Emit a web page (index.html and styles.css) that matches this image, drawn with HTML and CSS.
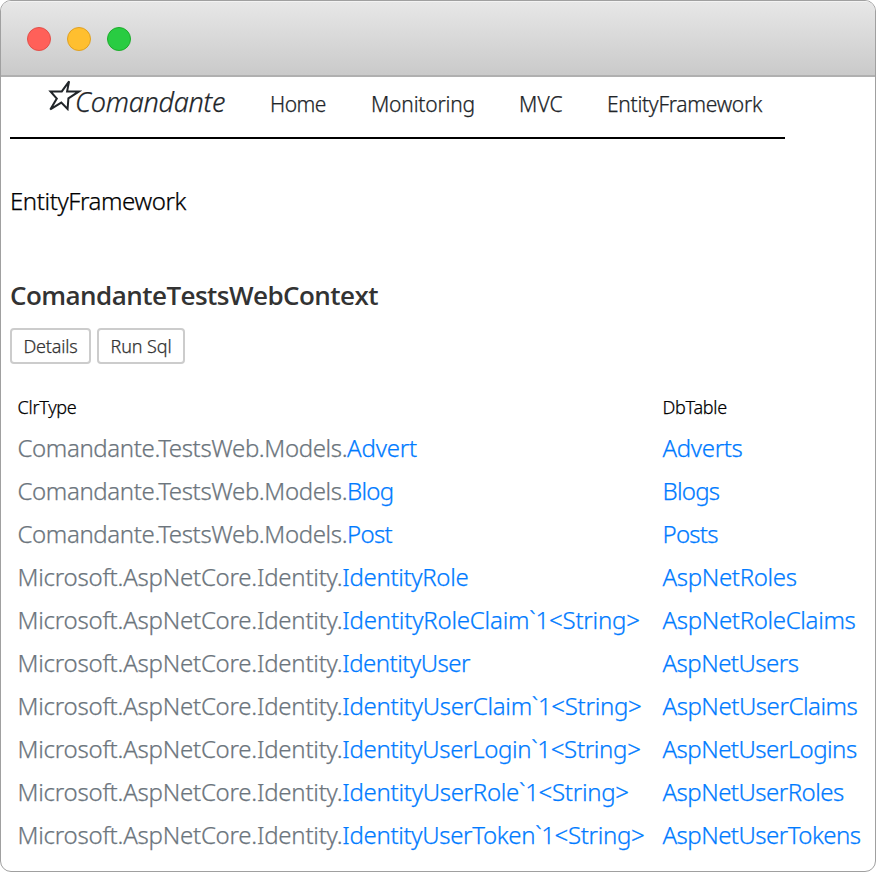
FILE: index.html
```html
<!DOCTYPE html>
<html lang="en">
<head>
<meta charset="utf-8">
<title>Comandante</title>
<link rel="stylesheet" href="styles.css">
</head>
<body>
<div class="window">
  <div class="titlebar"><i class="dot red"></i><i class="dot yellow"></i><i class="dot green"></i></div>
  <main class="content">
    <nav class="nav">
      <a class="brand"><svg class="star" viewBox="0 0 34 32" width="34" height="32"><path d="M21.1 2.4 L19.1 12.4 H31 L20.4 19.3 L19.6 30 L13.3 23.6 L2.3 30.4 L8.8 19.6 L2.5 12.4 H13.8 Z"/></svg><span>Comandante</span></a>
      <a class="home">Home</a>
      <a class="monitoring">Monitoring</a>
      <a class="mvc">MVC</a>
      <a class="entity">EntityFramework</a>
    </nav>
    <p class="page-title">EntityFramework</p>
    <h2>ComandanteTestsWebContext</h2>
    <div class="buttons"><button class="details">Details</button><button class="run">Run Sql</button></div>
    <table>
      <thead><tr><th>ClrType</th><th>DbTable</th></tr></thead>
      <tbody>
        <tr><td><span class="app">Comandante.TestsWeb.Models.</span><a class="short">Advert</a></td><td><a>Adverts</a></td></tr>
        <tr><td><span class="app">Comandante.TestsWeb.Models.</span><a class="tight">Blog</a></td><td><a class="tight">Blogs</a></td></tr>
        <tr><td><span class="app">Comandante.TestsWeb.Models.</span><a class="tight">Post</a></td><td><a class="tight">Posts</a></td></tr>
        <tr><td><span>Microsoft.AspNetCore.Identity.</span><a>IdentityRole</a></td><td><a>AspNetRoles</a></td></tr>
        <tr><td><span>Microsoft.AspNetCore.Identity.</span><a class="short">IdentityRoleClaim`1&lt;String&gt;</a></td><td><a>AspNetRoleClaims</a></td></tr>
        <tr><td><span>Microsoft.AspNetCore.Identity.</span><a class="long">IdentityUser</a></td><td><a class="long">AspNetUsers</a></td></tr>
        <tr><td><span>Microsoft.AspNetCore.Identity.</span><a class="claim">IdentityUserClaim`1&lt;String&gt;</a></td><td><a class="user-claims">AspNetUserClaims</a></td></tr>
        <tr><td><span>Microsoft.AspNetCore.Identity.</span><a>IdentityUserLogin`1&lt;String&gt;</a></td><td><a class="long">AspNetUserLogins</a></td></tr>
        <tr><td><span>Microsoft.AspNetCore.Identity.</span><a class="claim">IdentityUserRole`1&lt;String&gt;</a></td><td><a class="long">AspNetUserRoles</a></td></tr>
        <tr><td><span>Microsoft.AspNetCore.Identity.</span><a>IdentityUserToken`1&lt;String&gt;</a></td><td><a class="long">AspNetUserTokens</a></td></tr>
      </tbody>
    </table>
  </main>
</div>
</body>
</html>
```
FILE: styles.css
```css
* { box-sizing: border-box; }
body { margin: 0; background: #fff; font-family: "Noto Sans", "Open Sans", sans-serif; font-weight: 300; color: #212529; -webkit-text-stroke: .25px; }
.window { width: 876px; height: 872px; border: 1px solid #a0a0a0; border-radius: 11px; overflow: hidden; background: #fff; }
.titlebar { height: 76px; padding: 0 26px; display: flex; align-items: center; gap: 16px; background: linear-gradient(#e7e7e7, #cacaca); border-top: 1px solid #f3f3f3; border-bottom: 2px solid #b0b0b0; }
.dot { width: 24px; height: 24px; border-radius: 50%; border: 1px solid; }
.red { background: #ff6059; border-color: #e2504a; }
.yellow { background: #ffbf2f; border-color: #dfa023; }
.green { background: #29cc42; border-color: #1dac2b; }
.content { padding: 0 9px; }
.nav { width: 775px; height: 62px; border-bottom: 2px solid #000; padding-left: 38px; display: flex; align-items: flex-start; white-space: nowrap; font-size: 21px; line-height: 54px; }
.brand { display: flex; width: 222px; font-size: 27px; font-style: italic; line-height: 50px; letter-spacing: -.25px; }
.brand span { margin-left: -7px; }
.star { flex: none; margin-top: 2px; fill: none; stroke: #212529; stroke-width: 2; }
.home { width: 101px; letter-spacing: -.5px; }
.monitoring { width: 148px; letter-spacing: -.19px; }
.mvc { width: 88px; letter-spacing: .1px; }
.entity { letter-spacing: -.29px; }
.page-title { margin: 46px 0 0; font-size: 24px; line-height: 32px; letter-spacing: -.41px; color: #000; }
h2 { margin: 62px 0 0; font: 600 26px/32px "Open Sans", sans-serif; letter-spacing: -.54px; color: #333; -webkit-text-stroke: 0; }
.buttons { display: flex; gap: 6px; margin-top: 17px; }
button { height: 36px; padding: 0; border: 2px solid #ccc; border-radius: 4px; background: #fff; color: #333; font: 300 18px/32px "Noto Sans", sans-serif; letter-spacing: -.19px; }
.details { width: 81px; }
.run { width: 88px; letter-spacing: -.11px; }
table { margin-top: 25px; border-collapse: collapse; table-layout: fixed; width: 856px; white-space: nowrap; }
th, td { padding: 0 0 0 7.5px; text-align: left; font-weight: 300; }
th { height: 37px; width: 645px; font-size: 18px; line-height: 37px; letter-spacing: -.26px; color: #000; }
th + th { width: auto; }
td { height: 43px; font-size: 24px; line-height: 43px; }
td span { color: #6c757d; letter-spacing: -.23px; }
td .app { letter-spacing: -.38px; }
td a { color: #007bff; letter-spacing: -.33px; }
td .short { letter-spacing: -.2px; }
td .tight { letter-spacing: -.75px; }
td .claim { letter-spacing: -.28px; }
td .user-claims { letter-spacing: -.45px; }
td .long { letter-spacing: -.52px; }
```
